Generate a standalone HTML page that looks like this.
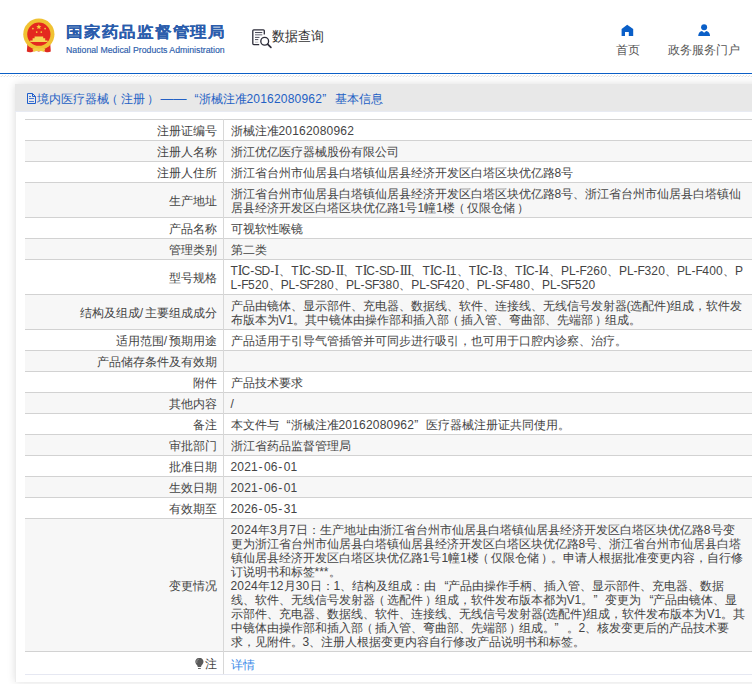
<!DOCTYPE html>
<html><head><meta charset="utf-8">
<style>
*{margin:0;padding:0;box-sizing:border-box}
html,body{width:752px;height:684px;overflow:hidden;background:#fff}
body{font-family:"Liberation Sans",sans-serif;color:#333;position:relative;text-spacing-trim:space-all}
.abs{position:absolute}
#hdr{position:absolute;left:0;top:0;width:752px;height:73px;background:#fff}
#bl{position:absolute;left:0;top:73px;width:752px;height:1px;background:#0b5fc6}
#hatch{position:absolute;left:0;top:75px;display:block}
#ttl{left:66px;top:21.5px;-webkit-text-stroke:0.08px #2a5cac;transform:scaleY(0.91);transform-origin:0 0;font-size:16.5px;font-weight:bold;color:#2a5cac;white-space:nowrap;letter-spacing:0.75px;line-height:22px}
#eng{left:66px;top:44px;font-size:9.6px;transform:scaleX(0.91);transform-origin:0 0;-webkit-text-stroke:0.15px #2a5cac;color:#2a5cac;white-space:nowrap;line-height:12px}
#sj{left:272px;top:27px;font-size:14px;transform:scaleX(0.925);transform-origin:0 0;color:#333;white-space:nowrap;line-height:18px}
.nav{font-size:12px;color:#555;white-space:nowrap;line-height:14px;top:42.7px}
#panel{position:absolute;left:15px;top:84px;width:760px;height:598px;background:#fff;box-shadow:0 0 8px rgba(0,0,0,0.13)}
#ph{position:absolute;left:0;top:0;width:100%;height:28px;background:#e8e8e8;border-bottom:1px solid #e8ebf3}
#pbl{position:absolute;left:0;top:28px;width:1px;height:570px;background:#ededed}
#pt{position:absolute;left:21.5px;top:7px;font-size:12px;line-height:16px;color:#2360c4;white-space:nowrap}
table{position:absolute;left:10px;top:35px;border-collapse:collapse;width:740px;font-size:12px;line-height:14px;color:#444}
td{border-top:1px solid #d2d2d2;padding:4px 7px 2px;vertical-align:middle;white-space:nowrap}
td.l{width:198px;text-align:right;padding-right:6px;border-right:1px solid #d8d8d8}
tr:nth-child(even) td{background:#f7f7f7}
tr.last td{border-bottom:1px solid #e6e8f2;height:23px}
.d{letter-spacing:0.2px}
.hy{letter-spacing:1.5px;margin-left:0.5px}
.rn{font-family:"Liberation Serif",serif;font-size:14px;line-height:10px}
.po{position:relative;left:-2px}
.pc{position:relative;left:2px}
.qo{display:inline-block;width:12px;text-align:right}
.qc{display:inline-block;width:12px;text-align:left}
.bulb{vertical-align:-1px;margin-right:1px}
a{color:#3a8ae8;text-decoration:none;position:relative;top:1px}
</style></head><body>
<div id="hdr">
 <svg class="abs" style="left:15px;top:10px" width="50" height="50" viewBox="15 10 50 50">
  <path d="M27.5 43 L26.8 51.5 Q29 52.8 32 52 L35 50.5 L38.8 51.5 L42.6 50.5 L45.6 52 Q48.6 52.8 50.8 51.5 L50.2 43 Z" fill="#de2a22"/>
  <circle cx="38.85" cy="34.2" r="15.6" fill="#f0c233"/>
  <circle cx="38.85" cy="34.2" r="11.6" fill="#e4291f"/>
  <path d="M29.5 44.2 Q38.85 49.8 48.2 44.2 L49.5 46 Q38.85 52 28.2 46 Z" fill="#f0c233"/>
  <path d="M34.6 36.4 h8.6 v2 h-8.6z M32.6 38.3 h12.6 v2.1 h-12.6z M30.2 40.4 h17.3 v1.7 h-17.3z" fill="#f7d556"/>
  <path d="M38.85 24.3 l0.75 1.6 1.8 .2 -1.35 1.2 .4 1.75 -1.6 -.9 -1.6 .9 .4 -1.75 -1.35 -1.2 1.8 -.2z" fill="#f5cf3e"/>
  <circle cx="32.9" cy="28.6" r="0.85" fill="#f5cf3e"/><circle cx="45.1" cy="28.6" r="0.85" fill="#f5cf3e"/>
  <circle cx="36.7" cy="32.1" r="0.85" fill="#f5cf3e"/><circle cx="41.3" cy="32.1" r="0.85" fill="#f5cf3e"/>
  <path d="M32.5 49.2 Q35 47.4 38.85 48.6 Q42.7 47.4 45.2 49.2 L44 52 Q41 50.6 38.85 51.3 Q36.7 50.6 33.7 52 Z" fill="#f3cd45"/>
 </svg>
 <div id="ttl" class="abs">国家药品监督管理局</div>
 <div id="eng" class="abs">National Medical Products Administration</div>
 <svg class="abs" style="left:248px;top:25px" width="26" height="26" viewBox="248 25 26 26">
  <path d="M259.2 44.6 H253.8 Q252.8 44.6 252.8 43.6 V30.8 Q252.8 29.8 253.8 29.8 H263.3 Q264.3 29.8 264.3 30.8 V34.6" fill="none" stroke="#2d2d3a" stroke-width="1.3"/>
  <path d="M255 32.5 H262.3 M255 37.4 H259.5 M255 39.6 H258.3" stroke="#3a3a48" stroke-width="0.9"/>
  <path d="M255 34.7 H262.3" stroke="#9a9aa4" stroke-width="1.6"/>
  <path d="M255 42.2 H258.3" stroke="#b4b4bc" stroke-width="0.9"/>
  <circle cx="264.7" cy="41.2" r="3.9" fill="none" stroke="#2d2d3a" stroke-width="1.35"/>
  <path d="M267.6 44.1 L270.9 47.4" stroke="#2d2d3a" stroke-width="1.7" stroke-linecap="round"/>
 </svg>
 <div id="sj" class="abs">数据查询</div>
 <svg class="abs" style="left:617px;top:21px" width="20" height="18" viewBox="617 21 20 18"><path d="M627.2 24.8 L633.2 29 V35.9 H628.8 V32 H625 V35.9 H621.6 V29 Z" fill="#0a5fc8"/></svg>
 <div class="abs nav" style="left:616px">首页</div>
 <svg class="abs" style="left:694px;top:21px" width="20" height="18" viewBox="694 21 20 18"><circle cx="704.1" cy="27.2" r="3" fill="#0a5fc8"/><path d="M698.2 36 C698.4 33 699.8 31.2 702 30.9 L704.1 32.8 L706.2 30.9 C708.4 31.2 709.9 33 710.1 36 Z" fill="#0a5fc8"/></svg>
 <div class="abs nav" style="left:668px">政务服务门户</div>
</div>
<div id="bl"></div>
<svg id="hatch" width="752" height="2" viewBox="0 0 752 2"><defs><pattern id="hp" width="3" height="2" patternUnits="userSpaceOnUse"><rect x="2" y="0" width="1" height="1" fill="#e2e2e2"/><rect x="1" y="1" width="1" height="1" fill="#e2e2e2"/><rect x="0" y="1" width="1" height="1" fill="#f3f3f3"/></pattern></defs><rect width="752" height="2" fill="url(#hp)"/></svg>
<div id="panel">
 <div id="ph"></div><div id="pbl"></div>
 <svg class="abs" style="left:11px;top:8px" width="12" height="13" viewBox="0 0 12 13"><path d="M1.5 1.5 H6.5 L9.5 4.5 V11.5 H1.5 Z" fill="none" stroke="#1f5fcc" stroke-width="1"/><path d="M6.5 1.5 V4.5 H9.5" fill="none" stroke="#1f5fcc" stroke-width="1"/><path d="M3 4.5 H5 M3 6.5 H8 M3 9.5 H8" stroke="#4a7ad6" stroke-width="1"/></svg>
<div id="pt">境内医疗器械<span class="po" style="left:-2.6px">（</span>注册<span style="position:relative;left:2.5px">）</span><span style="margin-left:4px;font-size:13px">——</span><span class="qo">“</span>浙械注准<span class="d">20162080962</span><span class="qc" style="width:13px">”</span>基本信息</div>
 <table>
<tr><td class="l">注册证编号</td><td>浙械注准<span class="d">20162080962</span></td></tr>
<tr><td class="l">注册人名称</td><td>浙江优亿医疗器械股份有限公司</td></tr>
<tr><td class="l">注册人住所</td><td>浙江省台州市仙居县白塔镇仙居县经济开发区白塔区块优亿路<span class="d">8</span>号</td></tr>
<tr><td class="l">生产地址</td><td>浙江省台州市仙居县白塔镇仙居县经济开发区白塔区块优亿路<span class="d">8</span>号、浙江省台州市仙居县白塔镇仙<br>居县经济开发区白塔区块优亿路<span class="d">1</span>号<span class="d">1</span>幢<span class="d">1</span>楼<span class="po">（</span>仅限仓储<span class="pc">）</span></td></tr>
<tr><td class="l">产品名称</td><td>可视软性喉镜</td></tr>
<tr><td class="l">管理类别</td><td>第二类</td></tr>
<tr><td class="l">型号规格</td><td>T<span class="rn" style="letter-spacing:-1px">I</span>C-<span style="letter-spacing:-0.6px">S</span>D-<span class="rn" style="padding:0 0.2px 0 0.2px">I</span>、T<span class="rn" style="letter-spacing:-1px">I</span>C-<span style="letter-spacing:-0.6px">S</span>D-<span class="rn" style="letter-spacing:-0.85px;padding-left:0.6px">II</span>、T<span class="rn" style="letter-spacing:-1px">I</span>C-<span style="letter-spacing:-0.6px">S</span>D-<span class="rn" style="letter-spacing:-1.15px;padding-left:0.8px">III</span>、T<span class="rn" style="letter-spacing:-1px">I</span>C-<span class="rn" style="letter-spacing:-1px">I</span><span class="d">1</span>、T<span class="rn" style="letter-spacing:-1px">I</span>C-<span class="rn" style="letter-spacing:-1px">I</span><span class="d">3</span>、T<span class="rn" style="letter-spacing:-1px">I</span>C-<span class="rn" style="letter-spacing:-1px">I</span><span class="d">4</span>、<span style="letter-spacing:-0.2px">P</span>L-<span style="letter-spacing:-0.5px">F</span><span class="d">260</span>、<span style="letter-spacing:-0.2px">P</span>L-<span style="letter-spacing:-0.5px">F</span><span class="d">320</span>、<span style="letter-spacing:-0.2px">P</span>L-<span style="letter-spacing:-0.5px">F</span><span class="d">400</span>、<span style="letter-spacing:-0.2px">P</span><br>L-<span style="letter-spacing:-0.5px">F</span><span class="d">520</span>、<span style="letter-spacing:-0.2px">P</span>L-<span style="letter-spacing:-0.6px">S</span><span style="letter-spacing:-0.5px">F</span><span class="d">280</span>、<span style="letter-spacing:-0.2px">P</span>L-<span style="letter-spacing:-0.6px">S</span><span style="letter-spacing:-0.5px">F</span><span class="d">380</span>、<span style="letter-spacing:-0.2px">P</span>L-<span style="letter-spacing:-0.6px">S</span><span style="letter-spacing:-0.5px">F</span><span class="d">420</span>、<span style="letter-spacing:-0.2px">P</span>L-<span style="letter-spacing:-0.6px">S</span><span style="letter-spacing:-0.5px">F</span><span class="d">480</span>、<span style="letter-spacing:-0.2px">P</span>L-<span style="letter-spacing:-0.6px">S</span><span style="letter-spacing:-0.5px">F</span><span class="d">520</span></td></tr>
<tr><td class="l">结构及组成<span style="letter-spacing:1.5px">/</span>主要组成成分</td><td>产品由镜体、显示部件、充电器、数据线、软件、连接线、无线信号发射器(选配件)组成，软件发<br>布版本为V<span class="d">1</span>。其中镜体由操作部和插入部<span class="po">（</span>插入管、弯曲部、先端部<span class="pc">）</span>组成。</td></tr>
<tr><td class="l">适用范围<span style="letter-spacing:1.5px">/</span>预期用途</td><td>产品适用于引导气管插管并可同步进行吸引，也可用于口腔内诊察、治疗。</td></tr>
<tr><td class="l">产品储存条件及有效期</td><td></td></tr>
<tr><td class="l">附件</td><td>产品技术要求</td></tr>
<tr><td class="l">其他内容</td><td><span style="letter-spacing:1.5px">/</span></td></tr>
<tr><td class="l">备注</td><td>本文件与<span class="qo">“</span>浙械注准<span class="d">20162080962</span><span class="qc">”</span>医疗器械注册证共同使用。</td></tr>
<tr><td class="l">审批部门</td><td>浙江省药品监督管理局</td></tr>
<tr><td class="l">批准日期</td><td><span class="d">2021</span><span class="hy">-</span><span class="d">06</span><span class="hy">-</span><span class="d">01</span></td></tr>
<tr><td class="l">生效日期</td><td><span class="d">2021</span><span class="hy">-</span><span class="d">06</span><span class="hy">-</span><span class="d">01</span></td></tr>
<tr><td class="l">有效期至</td><td><span class="d">2026</span><span class="hy">-</span><span class="d">05</span><span class="hy">-</span><span class="d">31</span></td></tr>
<tr><td class="l">变更情况</td><td><span class="d">2024</span>年<span class="d">3</span>月<span class="d">7</span>日：生产地址由浙江省台州市仙居县白塔镇仙居县经济开发区白塔区块优亿路<span class="d">8</span>号变<br>更为浙江省台州市仙居县白塔镇仙居县经济开发区白塔区块优亿路<span class="d">8</span>号、浙江省台州市仙居县白塔<br>镇仙居县经济开发区白塔区块优亿路<span class="d">1</span>号<span class="d">1</span>幢<span class="d">1</span>楼<span class="po">（</span>仅限仓储<span class="pc">）</span>。申请人根据批准变更内容，自行修<br>订说明书和标签***。<br><span class="d">2024</span>年<span class="d">12</span>月<span class="d">30</span>日：<span class="d">1</span>、结构及组成：由<span class="qo">“</span>产品由操作手柄、插入管、显示部件、充电器、数据<br>线、软件、无线信号发射器<span class="po">（</span>选配件<span class="pc">）</span>组成，软件发布版本都为V<span class="d">1</span>。<span class="qc">”</span>变更为<span class="qo">“</span>产品由镜体、显<br>示部件、充电器、数据线、软件、连接线、无线信号发射器(选配件)组成，软件发布版本为V<span class="d">1</span>。其<br>中镜体由操作部和插入部<span class="po">（</span>插入管、弯曲部、先端部<span class="pc">）</span>组成。<span class="qc">”</span>。<span class="d">2</span>、核发变更后的产品技术要<br>求，见附件。<span class="d">3</span>、注册人根据变更内容自行修改产品说明书和标签。</td></tr>
<tr class="last"><td class="l"><svg class="bulb" width="9" height="11" viewBox="194.5 658 9 11"><path d="M198.9 657.8 C196.6 657.8 194.8 659.5 194.8 661.8 C194.8 663.4 195.9 664.4 196.8 665.6 L197.3 666.9 H200.5 L201 665.6 C201.9 664.4 203 663.4 203 661.8 C203 659.5 201.2 657.8 198.9 657.8 Z" fill="#5a5a5a"/><path d="M196.3 662.8 C196 661 196.8 659.6 198.2 659.1" fill="none" stroke="#a8a8a8" stroke-width="0.8"/><rect x="197.5" y="668" width="2.8" height="1" fill="#666"/></svg>注</td><td><a>详情</a></td></tr>
</table>
</div>
</body></html>
